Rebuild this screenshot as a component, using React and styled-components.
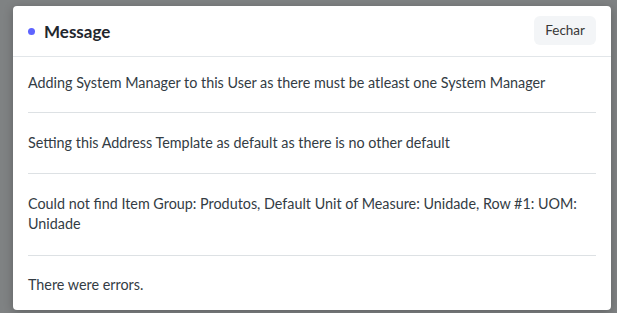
import React from "react";
import styled, { createGlobalStyle } from "styled-components";

const Global = createGlobalStyle`
  html, body { margin: 0; padding: 0; height: 100%; }
  body {
    background: #7f8283;
    font-family: "Lato", "Liberation Sans", sans-serif;
    -webkit-font-smoothing: antialiased;
  }
`;

const Page = styled.div`
  padding: 6px 6px 0 13px;
`;

const Modal = styled.div`
  width: 598px;
  height: 304px;
  background: #ffffff;
  border-radius: 4px;
  box-shadow: 0 2px 10px rgba(0, 0, 0, 0.25);
  overflow: hidden;
  display: flex;
  flex-direction: column;
`;

const Header = styled.div`
  flex-shrink: 0;
  display: flex;
  align-items: center;
  justify-content: space-between;
  height: 50px;
  padding: 0 15px;
  border-bottom: 1px solid #e2e6e9;
`;

const Title = styled.div`
  display: flex;
  align-items: center;
  gap: 9px;
  font-size: 17px;
  font-weight: 700;
  color: #1f272e;
`;

const Dot = styled.span`
  width: 7px;
  height: 7px;
  border-radius: 50%;
  background: ${(p) => p.color};
`;

const Button = styled.button`
  height: 29px;
  padding: 0 11px;
  margin-top: -2px;
  border: none;
  border-radius: 6px;
  background: #f3f5f7;
  color: #383838;
  font-family: inherit;
  font-size: 13.5px;
`;

const Body = styled.div`
  flex-shrink: 0;
  padding: 0 15px;
`;

const Item = styled.div`
  padding: 19.75px 0;
  font-size: 14.35px;
  line-height: 20.5px;
  color: #333c44;
  & + & {
    border-top: 1px solid #dde1e4;
  }
  &:first-child {
    padding: 16px 0 18.5px;
  }
`;

const messages = [
  "Adding System Manager to this User as there must be atleast one System Manager",
  "Setting this Address Template as default as there is no other default",
  "Could not find Item Group: Produtos, Default Unit of Measure: Unidade, Row #1: UOM: Unidade",
  "There were errors.",
];

export default function App() {
  return (
    <>
      <Global />
      <Page>
        <Modal>
          <Header>
            <Title>
              <Dot color="#5e64ff" />
              Message
            </Title>
            <Button>Fechar</Button>
          </Header>
          <Body>
            {messages.map((m, i) => (
              <Item key={i}>{m}</Item>
            ))}
          </Body>
        </Modal>
      </Page>
    </>
  );
}
